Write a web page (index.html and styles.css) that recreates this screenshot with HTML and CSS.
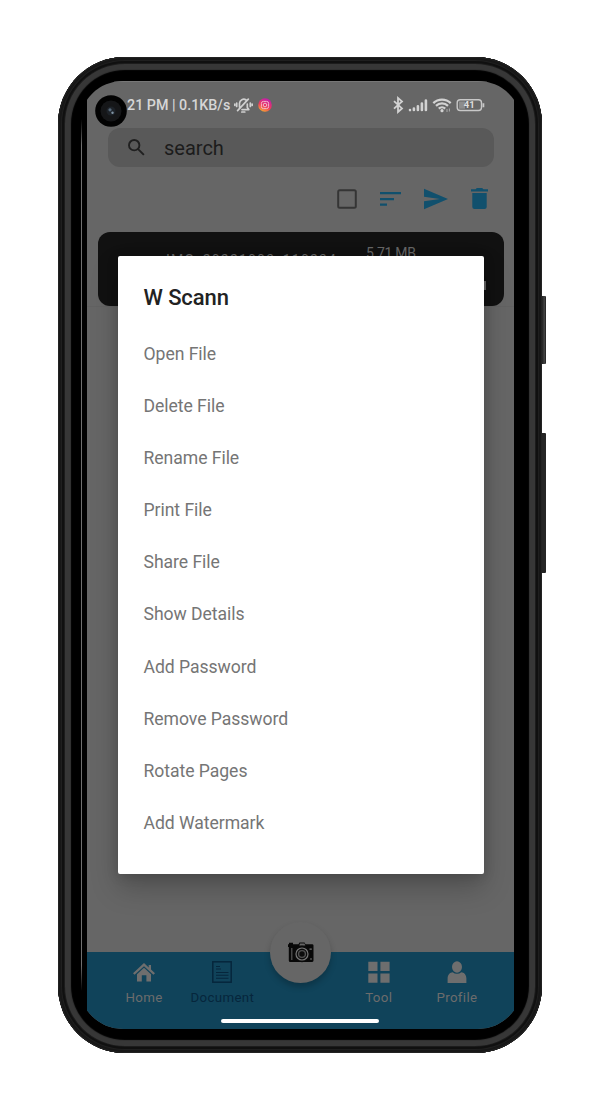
FILE: index.html
```html
<!DOCTYPE html>
<html lang="en">
<head>
<meta charset="utf-8">
<title>W Scann</title>
<link rel="stylesheet" href="styles.css">
</head>
<body>
<div class="phone">
  <i class="side-button power"></i>
  <i class="side-button volume"></i>
  <i class="edge-light"></i>
  <div class="screen">
    <div class="glass">
      <div class="status">
        <span class="clock">21 PM | 0.1KB/s</span>
        <svg class="bell" width="19" height="17" viewBox="0 0 19 17" fill="none" stroke="#d0d0d0" stroke-width="1.7" stroke-linecap="round" stroke-linejoin="round"><path d="M8 12.6h6.8l-1.5-2V7M5.5 10V6.2a4.2 4.2 0 0 1 6.6-3.2M7.8 15h3M3.6 13.6L14.3 2.2M2.7 6v3.5M.8 7v1.5M16.3 6v3.5M18.2 7v1.5"/></svg>
        <svg class="insta" width="14" height="14" viewBox="0 0 14 14"><defs><linearGradient id="ig" x1=".2" y1="1" x2=".65" y2="0"><stop offset="0" stop-color="#f8b62c"/><stop offset=".45" stop-color="#ef3b5c"/><stop offset="1" stop-color="#c21bb0"/></linearGradient></defs><circle cx="7" cy="7" r="6.8" fill="url(#ig)"/><g fill="none" stroke="#f3b9cc" stroke-width="1"><rect x="3.4" y="3.4" width="7.2" height="7.2" rx="2"/><circle cx="7" cy="7" r="1.8"/></g></svg>
        <svg class="signals" width="94" height="18" viewBox="0 0 94 18">
          <path d="M3 5.2l8 7.2-4 3.6V2l4 3.4-8 7.2" fill="none" stroke="#d2d2d2" stroke-width="1.8"/>
          <g stroke="#d2d2d2" stroke-width="2.6" stroke-linecap="round"><path d="M19 14v.1M22.9 12.6V14M26.9 10.2V14M30.9 7.6V14M34.9 4.6V14"/></g>
          <g fill="none" stroke="#d2d2d2" stroke-width="2.2"><path d="M42.3 7.1a12.5 12.5 0 0 1 17.4 0M45 9.9a8.6 8.6 0 0 1 12 0M47.8 12.6a4.6 4.6 0 0 1 6.4 0"/></g>
          <circle cx="51" cy="14.7" r="1.6" fill="#d2d2d2"/><path d="M56 13v3M58.4 12.5v3" stroke="#aaa" stroke-width="1"/>
          <rect x="66.2" y="3.7" width="24.3" height="10.8" rx="3" fill="none" stroke="#c8c8c8" stroke-width="1.4"/>
          <path d="M68 5.5h6v7.2h-6z" fill="#8d8d8d"/><path d="M92.4 7.2v4" stroke="#c8c8c8" stroke-width="1.8"/>
          <text x="78.2" y="12.3" text-anchor="middle" class="battery-text">41</text>
        </svg>
      </div>
      <div class="search">
        <svg width="18" height="18" viewBox="0 0 18 18" fill="none" stroke="#202020" stroke-width="1.9"><circle cx="6.2" cy="6.2" r="5.2"/><path d="M10.1 10.1l5.8 5.8"/></svg>
        <span>search</span>
      </div>
      <div class="actions">
        <svg width="20" height="20" viewBox="0 0 20 20"><rect x="1.2" y="1.2" width="17.6" height="17.6" rx="1.5" fill="none" stroke="#353535" stroke-width="2"/></svg>
        <svg width="21" height="20" viewBox="0 0 21 20" fill="#11506d"><path d="M0 3h21v2.2H0zM0 9h14v2.2H0zM0 14.5h7v2.2H0z"/></svg>
        <svg width="24" height="22" viewBox="0 0 24 22"><path d="M0 .7L24 11 0 21.3v-8L16 11 0 8.7z" fill="#11506d"/></svg>
        <svg width="17" height="21" viewBox="0 0 17 21" fill="#11506d"><path d="M0 1.2h4.6L5.8 0h5.4l1.2 1.2H17v2.4H0zM1.3 5h14.4v13.7a2.2 2.2 0 0 1-2.2 2.3h-10a2.2 2.2 0 0 1-2.2-2.3z"/></svg>
      </div>
      <div class="file-card">
        <span class="file-name">IMG_20221003_110234</span>
        <span class="file-size">5.71 MB</span>
        <i class="file-more"></i>
      </div>
      <div class="list-area"></div>
      <nav class="tabs">
        <div class="tab"><svg width="24" height="22" viewBox="0 0 24 22" fill="#6e6e6e"><path d="M12 2L1 12.2l1.6 1.6L12 5.3l9.4 8.5 1.6-1.6-4-3.7V4h-2.3v2.4z"/><path d="M12 6.8l7 6.5v7.2h-4.6v-6.3H9.8v6.3H5v-7.2z"/></svg><span>Home</span></div>
        <div class="tab current"><svg width="22" height="22" viewBox="0 0 22 22" fill="none" stroke="#06263c"><rect x="1.8" y=".8" width="18.4" height="20.4" stroke-width="1.5"/><path d="M5 5.5h4M5 8h5M5 11.5h12.5M5 14.3h12.5M5 17.2h12.5" stroke-width="1.1"/></svg><span>Document</span></div>
        <div class="tab gap"></div>
        <div class="tab"><svg width="22" height="22" viewBox="0 0 22 22" fill="#6e6e6e"><path d="M.3.7h9.2v9.2H.3zM12.4.7h9.2v9.2h-9.2zM.3 12.5h9.2v9.2H.3zM12.4 12.5h9.2v9.2h-9.2z"/></svg><span>Tool</span></div>
        <div class="tab"><svg width="20" height="22" viewBox="0 0 20 22" fill="#6e6e6e"><ellipse cx="10" cy="6" rx="5" ry="5.8"/><path d="M.6 22v-4.5c0-4 2.4-5.9 5.1-6.3a6.5 6.5 0 0 0 8.6 0c2.7.4 5.1 2.3 5.1 6.3V22z"/></svg><span>Profile</span></div>
      </nav>
      <div class="camera">
        <svg width="26" height="22" viewBox="0 0 26 22"><path d="M1 2.2V.8h4v1.4h5.5L11.5.5h5l1 1.7h7q1 .2 1 1.4v15q0 1.3-1.3 1.3H2Q.8 20 .8 18.6V5H0V2.2z" fill="#080808"/><path d="M12 1.6h4.5l.8 2h-6z" fill="#666"/><path d="M3.8 6v12" stroke="#555" stroke-width="1.2"/><circle cx="14" cy="12" r="8.3" fill="#0b0b0b"/><circle cx="14" cy="12" r="6" fill="none" stroke="#777" stroke-width="1.2"/><circle cx="14" cy="12" r="3.4" fill="none" stroke="#505050" stroke-width="1.4"/><path d="M21.5 7.2h2.3M22 17h2" stroke="#707070" stroke-width="1.2"/></svg>
      </div>
      <i class="gesture"></i>
      <div class="dialog">
        <h1>W Scann</h1>
        <ul>
          <li>Open File</li><li>Delete File</li><li>Rename File</li><li>Print File</li><li>Share File</li>
          <li>Show Details</li><li>Add Password</li><li>Remove Password</li><li>Rotate Pages</li><li>Add Watermark</li>
        </ul>
      </div>
    </div>
  </div>
  <svg class="lens" width="32" height="32" viewBox="0 0 32 32"><circle cx="16" cy="16" r="15.8" fill="#020202"/><circle cx="16" cy="16" r="10.5" fill="#151618"/><circle cx="16" cy="16" r="4.5" fill="#1d2228"/><circle cx="15" cy="14.8" r="1.6" fill="#566879"/><circle cx="17.5" cy="17.8" r="1.2" fill="#8195a5"/></svg>
</div>
</body>
</html>
```
FILE: styles.css
```css
* { box-sizing: border-box; }
body {
  margin: 0;
  width: 600px;
  height: 1111px;
  padding: 57px 58px;
  background: #fff;
  font-family: Roboto, "Liberation Sans", sans-serif;
  overflow: hidden;
}
.phone {
  position: relative;
  width: 484px;
  height: 996px;
  padding: 24px 28px 24px 29px;
  border-radius: 67px;
  background: #000;
  box-shadow:
    inset 0 0 0 1px #222,
    inset 0 0 0 3px #171717,
    inset 0 0 0 4px #1f1f1f,
    inset 0 0 0 6px #101010,
    inset 0 0 0 7px #1c1c1c,
    inset 0 0 1px 13px #373737;
}
.side-button {
  position: absolute;
  left: 484px;
  width: 4px;
  border-radius: 0 1px 1px 0;
  background: linear-gradient(90deg, #202020, #444 60%, #1c1c1c);
}
.power { top: 239px; height: 68px; }
.volume { top: 376px; height: 140px; background: #252525; }
.edge-light {
  position: absolute;
  left: 23px;
  top: 62px;
  width: 1px;
  height: 872px;
  background: linear-gradient(transparent, #707070 3%, #707070 97%, transparent);
}
.screen {
  width: 427px;
  height: 948px;
  display: flex;
  justify-content: center;
  overflow: hidden;
}
.glass {
  position: relative;
  flex: 0 0 443px;
  height: 948px;
  padding: 0 8px;
  display: flex;
  flex-direction: column;
  border-radius: 44px;
  overflow: hidden;
  background: #666;
}
.status {
  height: 47px;
  display: flex;
  align-items: center;
  padding: 1px 29px 0 40px;
  box-shadow: inset 0 1px #777;
}
.clock { font-size: 14.3px; font-weight: 500; color: #d6d6d6; white-space: nowrap; width: 106px; letter-spacing: 0; }
.bell { margin-left: 1px; }
.insta { margin-left: 5px; }
.signals { margin-left: auto; }
.battery-text { font: 700 9.5px Roboto, sans-serif; fill: #dedede; }
.search {
  height: 39px;
  margin: 0 20px 0 21px;
  padding-left: 20px;
  display: flex;
  align-items: center;
  gap: 18px;
  border-radius: 12px;
  background: #595959;
  color: #1c1c1c;
  font-size: 20px;
  letter-spacing: 0;
}
.actions {
  height: 65px;
  padding: 0 26.5px 2px 249.5px;
  display: flex;
  align-items: center;
  justify-content: space-between;
}
.file-card {
  position: relative;
  height: 74px;
  margin: 0 10px 0 11px;
  padding: 13px 0 0 68px;
  display: flex;
  align-items: flex-start;
  border-radius: 12px;
  background: #111;
  color: #666;
  font-size: 14px;
}
.file-name { width: 200px; padding-top: 7px; letter-spacing: 1.2px; line-height: 16px; white-space: nowrap; }
.file-size { letter-spacing: -.3px; line-height: 16px; }
.file-more { position: absolute; right: 18px; top: 49px; width: 2px; height: 9px; background: #666; }
.list-area { flex: 1; border-top: 1px solid #626262; }
.tabs {
  height: 77px;
  padding: 9px 18px 0;
  display: flex;
  background: #10435a;
  color: #6c6c6c;
  font-size: 13.3px;
  letter-spacing: .35px;
}
.tab { flex: 1; display: flex; flex-direction: column; align-items: center; gap: 6px; line-height: 17px; }
.tab svg { flex: none; }
.current { color: #06263c; }
.camera {
  position: absolute;
  left: 191px;
  top: 841px;
  width: 61px;
  height: 61px;
  display: flex;
  align-items: center;
  justify-content: center;
  border-radius: 50%;
  background: #666;
  box-shadow: 0 4px 6px rgba(0,0,0,.22);
}
.gesture { position: absolute; left: 142px; bottom: 6px; width: 158px; height: 4px; border-radius: 2px; background: #fff; }
.dialog {
  position: absolute;
  left: 38.5px;
  top: 175px;
  width: 366px;
  height: 618px;
  padding: 26px 26px 0;
  border-radius: 2px;
  background: #fff;
  box-shadow: 0 14px 28px rgba(0,0,0,.22), 0 2px 12px rgba(0,0,0,.15);
}
.dialog h1 { margin: 0; font-size: 22px; line-height: 31px; font-weight: 500; color: #222; letter-spacing: -.1px; }
.dialog ul { margin: 14.5px 0 0; padding: 0; list-style: none; }
.dialog li { height: 52.2px; line-height: 52.2px; font-size: 17.6px; color: #757575; letter-spacing: -.05px; }
.lens { position: absolute; left: 37px; top: 37.5px; }
```
